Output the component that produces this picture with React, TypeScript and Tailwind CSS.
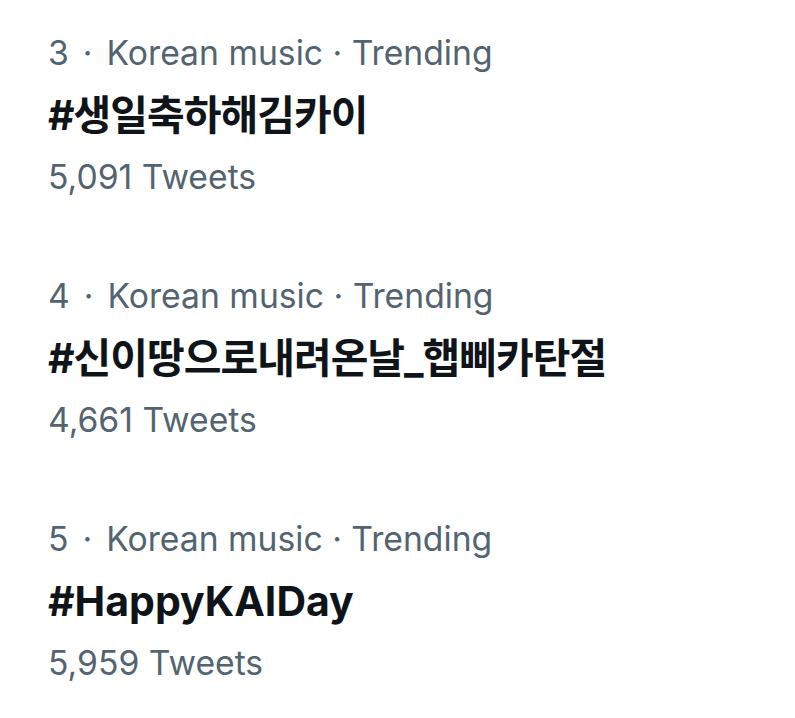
const trends = [
  { rank: 3, title: "#생일축하해김카이", count: "5,091", hangul: true },
  { rank: 4, title: "#신이땅으로내려온날_햅삐카탄절", count: "4,661", hangul: true },
  { rank: 5, title: "#HappyKAIDay", count: "5,959", hangul: false },
];

function TrendItem({
  rank,
  title,
  count,
  hangul,
}: {
  rank: number;
  title: string;
  count: string;
  hangul: boolean;
}) {
  return (
    <div className="flex flex-col">
      <div className="flex items-center h-[62px] text-[#536471] text-[33.7px] leading-[62px]">
        <span>{rank}</span>
        <span className="px-[14px]">·</span>
        <span>Korean music · Trending</span>
      </div>
      <div
        className={
          hangul
            ? "h-[62px] text-[#0f1419] text-[41px] leading-[62px] font-bold tracking-[-1px]"
            : "h-[62px] text-[#0f1419] text-[41px] leading-[62px] font-bold"
        }
      >
        {title}
      </div>
      <div className="h-[62px] text-[#536471] text-[33.7px] leading-[62px]">{count} Tweets</div>
    </div>
  );
}

export default function App() {
  return (
    <div
      className="w-[795px] h-[718px] bg-white pl-[48px] pt-[22px] flex flex-col gap-[57px] overflow-hidden"
      style={{ fontFamily: 'Inter, "Noto Sans CJK KR", sans-serif' }}
    >
      {trends.map((t) => (
        <TrendItem key={t.rank} {...t} />
      ))}
    </div>
  );
}
